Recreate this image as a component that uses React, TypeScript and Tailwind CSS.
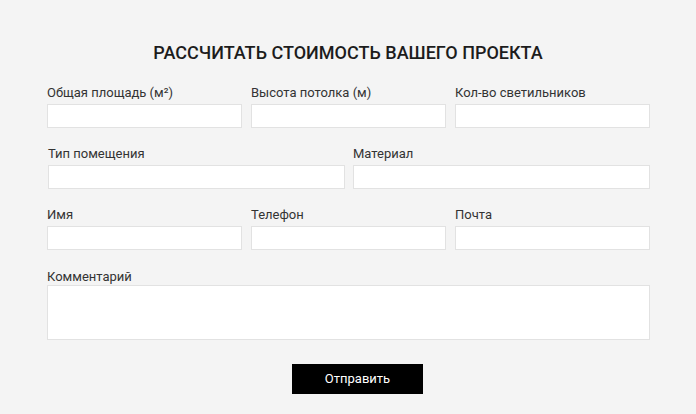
import React from "react";

const font = { fontFamily: "Roboto, 'Noto Sans', sans-serif" };

function Field({ label, className = "" }: { label: string; className?: string }) {
  return (
    <label className={"flex flex-col " + className}>
      <span className="mb-[4px] text-[13px] leading-[15px] text-[#333333]">{label}</span>
      <input type="text" className="h-[24px] w-full border border-[#e2e2e2] bg-white outline-none" />
    </label>
  );
}

export default function App() {
  return (
    <div style={font} className="h-[414px] w-full bg-[#f4f4f4] pt-[43px]">
      <h2 className="text-center text-[18px] font-medium uppercase leading-[20px] text-[#1c1c1c]">
        Рассчитать стоимость вашего проекта
      </h2>
      <form className="ml-[47px] mt-[22px] w-[603px]">
        <div className="grid grid-cols-3 gap-x-[9px]">
          <Field label="Общая площадь (м²)" />
          <Field label="Высота потолка (м)" />
          <Field label="Кол-во светильников" />
        </div>
        <div className="mt-[18px] grid grid-cols-2 gap-x-[8px] pl-[1px]">
          <Field label="Тип помещения" />
          <Field label="Материал" />
        </div>
        <div className="mt-[18px] grid grid-cols-3 gap-x-[9px]">
          <Field label="Имя" />
          <Field label="Телефон" />
          <Field label="Почта" />
        </div>
        <label className="mt-[19px] flex flex-col">
          <span className="mb-[1px] text-[13px] leading-[15px] text-[#333333]">Комментарий</span>
          <textarea className="h-[55px] w-full resize-none border border-[#e2e2e2] bg-white outline-none" />
        </label>
        <button
          type="button"
          className="ml-[245px] mt-[24px] h-[30px] w-[131px] bg-black text-[13px] text-white"
        >
          Отправить
        </button>
      </form>
    </div>
  );
}
